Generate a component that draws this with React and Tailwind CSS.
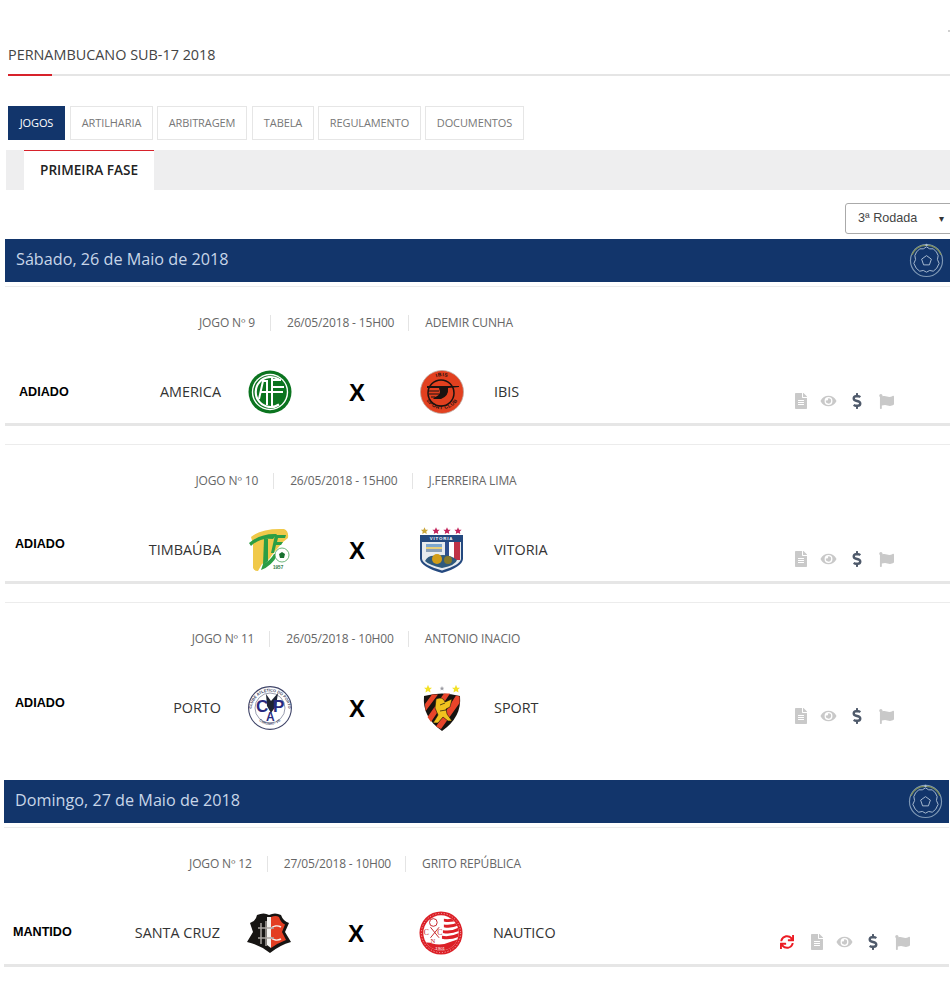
import React from 'react';
import { FaDollarSign, FaEye, FaFileAlt, FaFlag, FaSync } from 'react-icons/fa';

const tabs = [
  { label: 'ARTILHARIA', className: 'w-[83px] ml-[5px]' },
  { label: 'ARBITRAGEM', className: 'w-[90px] ml-[4px]' },
  { label: 'TABELA', className: 'w-[62px] ml-[5px]' },
  { label: 'REGULAMENTO', className: 'w-[103px] ml-[4px]' },
  { label: 'DOCUMENTOS', className: 'w-[99px] ml-[4px]' },
];

const sans = 'Liberation Sans, sans-serif';

const Star = ({ x, y, r, fill }) => (
  <path
    transform={`translate(${x} ${y}) scale(${r})`}
    d="M0 -1 L.29 -.31 L.95 -.31 L.47 .12 L.59 .81 L0 .45 L-.59 .81 L-.47 .12 L-.95 -.31 L-.29 -.31 Z"
    fill={fill}
  />
);

const AmericaLogo = () => (
  <svg viewBox="0 0 44 44" className="w-[44px] h-[44px]">
    <circle cx="22" cy="22" r="21.5" fill="#0b741f" />
    <circle cx="22" cy="22" r="18.2" fill="#fff" />
    <circle cx="22" cy="22" r="16.8" fill="#0b741f" />
    <path d="M31 9.5 A15 15 0 1 0 31 34.5" fill="none" stroke="#fff" strokeWidth="2.2" />
    <path d="M11 29 L15 11 H19 V35 M12 22 H35 M24 8 V36 M24 10 H33 M24 17 H36" fill="none" stroke="#fff" strokeWidth="2" />
  </svg>
);

const IbisLogo = () => (
  <svg viewBox="0 0 44 44" className="w-[44px] h-[44px]">
    <circle cx="22" cy="22" r="21.5" fill="#e2401f" stroke="#bda79f" strokeWidth=".8" />
    <circle cx="21" cy="23" r="13" fill="none" stroke="#1b1210" strokeWidth="1.5" />
    <path d="M7 16 H39 V17 L28 18 Q29 26 21 29 H13 L15 27 Q19 26 20 22 L19 18 L7 18 Z" fill="#1b1210" />
    <path d="M8 21 H19 M9 24 H19 M11 27 H15" stroke="#1b1210" strokeWidth="1.2" />
    <defs>
      <path id="ibis-top" d="M8 14 A16.5 16.5 0 0 1 36 14" />
      <path id="ibis-bottom" d="M4 25 A18.5 18.5 0 0 0 40 25" />
    </defs>
    <text fontSize="5" fontFamily={sans} fontWeight="700" fill="#1b1210" textAnchor="middle" letterSpacing=".5">
      <textPath href="#ibis-top" startOffset="50%">IBIS</textPath>
      <textPath href="#ibis-bottom" startOffset="50%">SPORT CLUB</textPath>
    </text>
  </svg>
);

const TimbaubaLogo = () => (
  <svg viewBox="0 0 44 44" className="w-[44px] h-[44px]">
    <path d="M3 9 Q14 0 36 1 Q41 3 40 10 L35 14 L24 27 Q20 34 14 36 L10 43 Q6 43 5 40 L5 16 Z" fill="#f0c94a" />
    <path d="M1 15 Q13 5 29 6 L25 11 Q12 9 3 18 Z" fill="#2b9e45" />
    <path d="M16 11 H20 V33 L15 37 Z" fill="#2b9e45" />
    <path d="M27 7 H38 L37 10 H30 L29 14 H35 L33 17 H28 L26 25 H23 Z" fill="#2b9e45" />
    <path d="M13 42 Q24 38 30 26 L26 26 Q22 33 15 36 Z" fill="#2b9e45" />
    <circle cx="34" cy="27" r="7" fill="#fff" stroke="#4aa35c" strokeWidth=".8" />
    <path d="M34 24 L37 26 L36 30 L32 30 L31 26 Z" fill="#17702f" />
    <text x="25" y="41" fontSize="4.6" fontWeight="700" fontFamily={sans} fill="#2b7a44">1957</text>
  </svg>
);

const VitoriaLogo = () => (
  <svg viewBox="0 0 44 46" className="w-[44px] h-[46px]">
    <Star x={4.5} y={4} r={3.8} fill="#c9a63a" />
    <Star x={16} y={4} r={3.8} fill="#c2255c" />
    <Star x={27} y={4} r={3.8} fill="#c2255c" />
    <Star x={38} y={4} r={3.8} fill="#c2255c" />
    <path d="M0 8 H43 V32 Q42 40 22 46 Q1 40 0 32 Z" fill="#24497f" />
    <path d="M2 15 H41 V32 Q40 38 22 43.5 Q3 38 2 32 Z" fill="#e7ebee" />
    <path d="M25 15 H29 V33 H25 Z" fill="#2e4f8e" />
    <path d="M29 15 H34 V33 H29 Z" fill="#fff" />
    <path d="M34 15 H40 V33 H34 Z" fill="#bf3347" />
    <path d="M6 17 H22 V20 H6 Z" fill="#7da7cf" />
    <path d="M6 20 H22 V22 H6 Z" fill="#e9cf7a" />
    <path d="M6 22 H22 V25 H6 Z" fill="#8aa0b8" />
    <path d="M5 34 Q8 28 16 29 Q28 26 37 33 Q36 38 22 41 Q9 38 5 34 Z" fill="#2f5a7d" />
    <circle cx="17" cy="32" r="5" fill="#d29d17" />
    <circle cx="28" cy="33" r="4" fill="#86792a" />
    <text x="21.5" y="13.4" textAnchor="middle" fontSize="4.4" fontWeight="700" fontFamily={sans} letterSpacing=".8" fill="#fff">VITORIA</text>
  </svg>
);

const PortoLogo = () => (
  <svg viewBox="0 0 44 44" className="w-[44px] h-[44px]">
    <circle cx="22" cy="22" r="21.4" fill="#fff" stroke="#3f4468" strokeWidth="1.1" />
    <circle cx="22" cy="22" r="15" fill="#fff" stroke="#555a78" strokeWidth=".6" />
    <defs>
      <path id="porto-top" d="M4.5 30 A18.5 18.5 0 1 1 39.5 30" />
      <path id="porto-bottom" d="M9 33 Q22 45 35 33" />
    </defs>
    <path d="M18 8 L23 15 L30 7 L28 20 L23 27 L19 20 Z" fill="#1f2433" />
    <text fontWeight="700" fontFamily={sans} fill="#282a80">
      <textPath href="#porto-top" startOffset="50%" textAnchor="middle" fontSize="3.9" fill="#3a3f63">CLUBE ATLÉTICO DO PORTO</textPath>
      <textPath href="#porto-bottom" startOffset="50%" textAnchor="middle" fontSize="3.3" fill="#3a3f63">CARUARU - PE</textPath>
      <tspan x="8" y="26" fontSize="17">C</tspan>
      <tspan x="25" y="26" fontSize="17">P</tspan>
      <tspan x="18" y="35" fontSize="12">A</tspan>
    </text>
  </svg>
);

const SportLogo = () => (
  <svg viewBox="0 0 44 46" className="w-[44px] h-[46px]">
    <Star x={8} y={4} r={4.2} fill="#f3e127" />
    <Star x={36} y={4} r={4.2} fill="#f3e127" />
    <Star x={22} y={3.5} r={2.4} fill="#9b9ba2" />
    <path d="M4 11 Q22 6 40 11 Q42 32 22 46 Q2 32 4 11 Z" fill="#17130f" />
    <path d="M5 19 L12 9.5 H18 L5.6 26 Z M7.5 32 L24 8.5 H30 L11 37 Z M16 41.5 L36 10.5 L39.6 11.5 V18 L21 44 Z" fill="#e8452a" />
    <path d="M16 14 Q23 11 25 17 L32 14 L30 22 L26 24 L27 29 L32 36 H28 L23 32 L18 38 H13 L18 30 L15 23 Z" fill="#f2c21f" stroke="#17130f" strokeWidth=".6" />
    <path d="M20 20 L25 18 M20 26 L26 25" stroke="#17130f" strokeWidth=".7" />
  </svg>
);

const SantaCruzLogo = () => (
  <svg viewBox="0 0 44 42" className="w-[44px] h-[42px]">
    <path d="M23 41 Q13 33 0 30 L6 20 L3 11 Q9 9 10 3 Q17 0 22 3 Q28 0 34 3 Q36 9 42 11 L38 20 L44 30 Q33 33 23 41 Z" fill="#171513" />
    <path d="M24 5 Q29 3 32 5 Q34 11 38 12.5 L35 20 L39 28 Q31 31 24 36 Z" fill="#e33e22" />
    <path d="M20 5 H24 V36 L20 33 Z" fill="#f4f2ef" />
    <path d="M34 15 A8 7 0 1 0 34 27" fill="none" stroke="#f4f2ef" strokeWidth="1.6" />
    <path d="M11 16 H27 M11 26 H27 M14 11 V32 M19 9 V34" fill="none" stroke="#a9a4a0" strokeWidth="1.5" />
  </svg>
);

const NauticoLogo = () => (
  <svg viewBox="0 0 46 46" className="w-[46px] h-[46px]">
    <clipPath id="nautico-inner"><circle cx="23" cy="23" r="18.5" /></clipPath>
    <circle cx="23" cy="23" r="22.5" fill="#dc2027" />
    <circle cx="23" cy="23" r="20.5" fill="none" stroke="#fff" strokeWidth=".7" strokeDasharray="1 2" />
    <circle cx="23" cy="23" r="18.5" fill="#fff" />
    <g clipPath="url(#nautico-inner)">
      <path d="M26 8 Q34 10 44 4 V8 Q34 13 26 11 Z M26 14 Q34 16 44 10 V14 Q34 19 26 17 Z M25 20 Q34 22 44 16 V20 Q34 25 25 23 Z M24 26 Q33 28 44 22 V26 Q33 31 24 29 Z" fill="#dc2027" />
      <path d="M0 34 Q10 32 14 34 Q23 37 34 32 Q40 30 46 27 V46 H0 Z" fill="#dc2027" />
    </g>
    <circle cx="15" cy="12" r="4" fill="none" stroke="#c42027" strokeWidth="1" />
    <path d="M12 17 L21 28 M21 17 L12 28" stroke="#c42027" strokeWidth="1" />
    <text fontFamily="Liberation Serif, serif" fontSize="8" fill="#c42027">
      <tspan x="5" y="25">C</tspan>
      <tspan x="19" y="25">C</tspan>
      <tspan x="12" y="33" fontSize="7">N</tspan>
      <tspan x="17" y="41" fontFamily={sans} fontSize="4.6" fill="#fff">1901</tspan>
    </text>
  </svg>
);

const logos = {
  america: AmericaLogo,
  ibis: IbisLogo,
  timbauba: TimbaubaLogo,
  vitoria: VitoriaLogo,
  porto: PortoLogo,
  sport: SportLogo,
  santacruz: SantaCruzLogo,
  nautico: NauticoLogo,
};

const firstDay = [
  { id: 9, date: '26/05/2018 - 15H00', ref: 'ADEMIR CUNHA', status: 'ADIADO', statusClass: 'pl-[19px]', home: 'AMERICA', away: 'IBIS', homeLogo: 'america', awayLogo: 'ibis', border: true },
  { id: 10, date: '26/05/2018 - 15H00', ref: 'J.FERREIRA LIMA', status: 'ADIADO', statusClass: 'pl-[15px] -translate-y-[6px]', home: 'TIMBAÚBA', away: 'VITORIA', homeLogo: 'timbauba', awayLogo: 'vitoria', border: true },
  { id: 11, date: '26/05/2018 - 10H00', ref: 'ANTONIO INACIO', status: 'ADIADO', statusClass: 'pl-[15px] -translate-y-[5px]', home: 'PORTO', away: 'SPORT', homeLogo: 'porto', awayLogo: 'sport', border: false, iconsUp: true },
];

const secondDay = { id: 12, date: '27/05/2018 - 10H00', ref: 'GRITO REPÚBLICA', status: 'MANTIDO', statusClass: 'pl-[14px] -translate-y-[1px]', home: 'SANTA CRUZ', away: 'NAUTICO', homeLogo: 'santacruz', awayLogo: 'nautico', border: true, refresh: true };

const BallIcon = () => (
  <svg viewBox="0 0 36 36" className="w-[35px] h-[35px]">
    <circle cx="18" cy="18" r="16.5" fill="none" stroke="#7f98b5" strokeWidth="1.2" />
    <path d="M3 12 A16.5 16.5 0 0 1 33 12" fill="none" stroke="#7f8f5c" strokeWidth="1.4" />
    <circle cx="18" cy="2" r="1.2" fill="#a9bcd2" />
    <path d="M18 4 Q21 7 25 6 Q29 9 30 13 Q28 17 31 21 Q29 27 25 29 Q21 27 18 30 Q15 27 11 29 Q7 27 5 21 Q8 17 6 13 Q7 9 11 6 Q15 7 18 4 Z" fill="none" stroke="#a9bcd2" strokeWidth="1" />
    <path d="M18 13 L23 16.6 L21 22.5 L15 22.5 L13 16.6 Z" fill="none" stroke="#a9bcd2" strokeWidth="1" strokeLinejoin="round" />
  </svg>
);

const ActionIcons = ({ refresh, up }) => (
  <div className={`ml-auto flex items-center ${refresh ? 'mr-[38px]' : 'mr-[55px]'} ${up ? 'mt-[16px]' : 'mt-[18px]'}`}>
    {refresh && <FaSync className="w-[14px] h-[14px] text-[#ec1c24] mr-[16px]" />}
    <FaFileAlt className="w-[14px] h-[16px] text-[#c9c9c9] mr-[12px]" />
    <FaEye className="w-[17px] h-[14px] text-[#c9c9c9] mr-[15px]" />
    <FaDollarSign className="w-[10px] h-[16px] text-[#4f5a6b] mr-[16px]" />
    <FaFlag className="w-[17px] h-[15px] text-[#c9c9c9]" />
  </div>
);

const MatchRow = ({ match }) => {
  const Home = logos[match.homeLogo];
  const Away = logos[match.awayLogo];

  return (
    <div className={match.border ? 'border-t border-[#ececec] h-[140px] flex flex-col' : 'border-t border-[#ececec] h-[178px] flex flex-col'}>
      <div className="-ml-[5px] w-[712px] mt-[27px] h-[18px] flex items-center justify-center text-[12px] tracking-[-0.15px] text-[#666]">
        <span>JOGO Nº {match.id}</span>
        <span className="ml-[15px] mr-[16px] h-[16px] w-px bg-[#e4e4e4]" />
        <span>{match.date}</span>
        <span className="ml-[14px] mr-[16px] h-[16px] w-px bg-[#e4e4e4]" />
        <span>{match.ref}</span>
      </div>
      <div className="-ml-[5px] mt-[38px] flex items-center h-[44px]">
        <div className={`w-[130px] shrink-0 text-[12.6px] font-bold text-black font-['Liberation_Sans',sans-serif] ${match.statusClass}`}>{match.status}</div>
        <div className="w-[91px] shrink-0 text-right text-[14.4px] text-[#333] whitespace-nowrap">{match.home}</div>
        <div className="ml-[27px] w-[44px] flex justify-center"><Home /></div>
        <div className="w-[128px] pl-[2px] text-center text-[24px] font-bold text-black font-['Liberation_Sans',sans-serif] translate-y-px">X</div>
        <div className="w-[44px] flex justify-center"><Away /></div>
        <div className="ml-[30px] text-[14.4px] text-[#333]">{match.away}</div>
        <ActionIcons refresh={match.refresh} up={match.iconsUp} />
      </div>
      {match.border && <div className="mt-auto h-[3px] bg-[#e6e6e6]" />}
    </div>
  );
};

const DayBand = ({ label }) => (
  <div className="h-[43px] bg-[#12356b] flex items-center justify-between pl-[11px] pr-[6px] text-[16.2px] text-[#c8d6e8]">
    <span className="-translate-y-px">{label}</span>
    <BallIcon />
  </div>
);

export default function App() {
  return (
    <div className="relative w-[950px] h-[986px] overflow-hidden bg-white font-['Open_Sans',sans-serif]">
      <span className="absolute right-0 top-[30px] w-[2px] h-[2px] bg-[#d0d0d0]" />
      <div className="pt-[44px] pl-[8px]">
        <div className="h-[32px] border-b-2 border-[#e5e5e5] text-[14.4px] text-[#444] relative">
          PERNAMBUCANO SUB-17 2018
          <span className="absolute left-0 -bottom-[2px] w-[44px] h-[2px] bg-[#d7222b]" />
        </div>
        <div className="mt-[30px] flex h-[34px] text-[11px] tracking-[-0.1px]">
          <div className="w-[57px] flex items-center justify-center bg-[#12356b] text-white">JOGOS</div>
          {tabs.map((tab) => (
            <div key={tab.label} className={`${tab.className} flex items-center justify-center border border-[#e6e6e6] text-[#777]`}>{tab.label}</div>
          ))}
        </div>
      </div>
      <div className="mt-[10px] ml-[6px] h-[40px] bg-[#eeeeef] pl-[18px]">
        <div className="w-[130px] h-[40px] bg-white border-t border-[#d7222b] flex items-center justify-center text-[13.6px] font-semibold text-[#222]">PRIMEIRA FASE</div>
      </div>
      <div className="mt-[13px] ml-[845px]">
        <div className="w-[108px] h-[31px] border border-[#aaa] rounded-[3px] flex items-center justify-between pl-[12px] pr-[8px] text-[12.6px] text-[#444] font-['Liberation_Sans',sans-serif]">
          <span>3ª Rodada</span>
          <span className="text-[10px] text-[#333]">▾</span>
        </div>
      </div>
      <div className="mt-[5px] ml-[5px]">
        <DayBand label="Sábado, 26 de Maio de 2018" />
        <div className="mt-[4px] flex flex-col gap-[18px]">
          {firstDay.map((match) => (
            <MatchRow key={match.id} match={match} />
          ))}
        </div>
      </div>
      <div className="ml-[4px] mr-[1px]">
        <DayBand label="Domingo, 27 de Maio de 2018" />
        <div className="mt-[4px]">
          <MatchRow match={secondDay} />
        </div>
      </div>
    </div>
  );
}
